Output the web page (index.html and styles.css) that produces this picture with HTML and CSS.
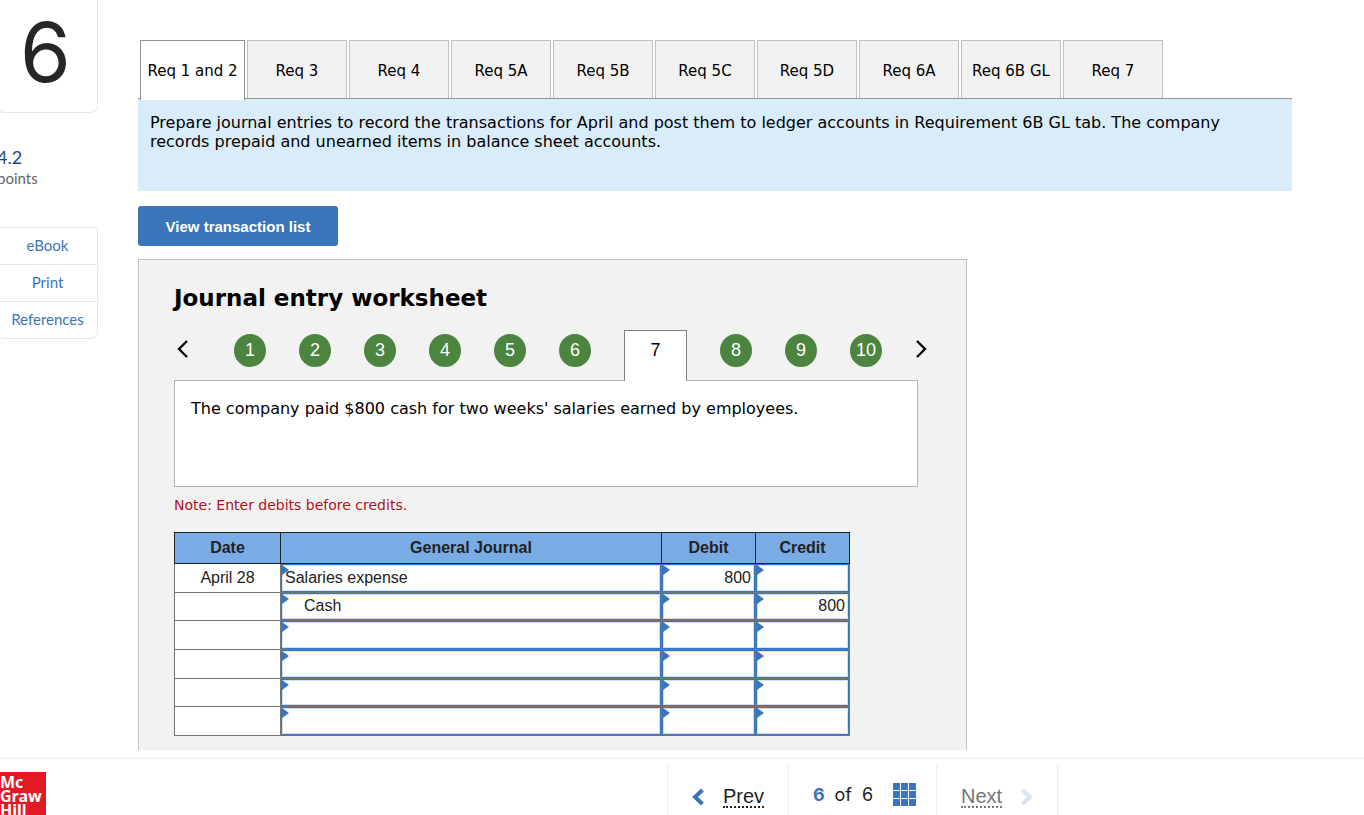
FILE: index.html
```html
<!DOCTYPE html>
<html lang="en">
<head>
    <meta charset="UTF-8">
    <title>Journal entry worksheet</title>
    <link rel="stylesheet" href="styles.css">
</head>
<body>
    <div class="page">
        <aside class="sidebar">
            <div class="question-number">6</div>
            <div class="points">
                <span class="points-value">4.2</span>
                <span class="points-label">points</span>
            </div>
            <nav class="resources">
                <a href="#ebook">eBook</a>
                <a href="#print">Print</a>
                <a href="#references">References</a>
            </nav>
        </aside>

        <main class="content">
            <div class="tabs">
                <button class="tab active">Req 1 and 2</button>
                <button class="tab">Req 3</button>
                <button class="tab">Req 4</button>
                <button class="tab">Req 5A</button>
                <button class="tab">Req 5B</button>
                <button class="tab">Req 5C</button>
                <button class="tab">Req 5D</button>
                <button class="tab">Req 6A</button>
                <button class="tab">Req 6B GL</button>
                <button class="tab">Req 7</button>
            </div>
            <p class="instructions">Prepare journal entries to record the transactions for April and post them to ledger accounts in Requirement 6B GL tab. The company records prepaid and unearned items in balance sheet accounts.</p>

            <button class="view-list">View transaction list</button>

            <section class="worksheet">
                <h1>Journal entry worksheet</h1>

                <div class="pager">
                    <button class="arrow arrow-prev" aria-label="Previous entry">
                        <svg width="12" height="18" viewBox="0 0 12 18"><path d="M10 1 L2 9 L10 17" fill="none" stroke="#000" stroke-width="2.3"/></svg>
                    </button>
                    <button class="step">1</button>
                    <button class="step">2</button>
                    <button class="step">3</button>
                    <button class="step">4</button>
                    <button class="step">5</button>
                    <button class="step">6</button>
                    <button class="step current">7</button>
                    <button class="step">8</button>
                    <button class="step">9</button>
                    <button class="step">10</button>
                    <button class="arrow" aria-label="Next entry">
                        <svg width="12" height="18" viewBox="0 0 12 18"><path d="M2 1 L10 9 L2 17" fill="none" stroke="#000" stroke-width="2.3"/></svg>
                    </button>
                </div>

                <div class="description">The company paid $800 cash for two weeks' salaries earned by employees.</div>
                <p class="note">Note: Enter debits before credits.</p>

                <table class="journal">
                    <thead>
                        <tr>
                            <th class="col-date">Date</th>
                            <th>General Journal</th>
                            <th class="col-amount">Debit</th>
                            <th class="col-amount">Credit</th>
                        </tr>
                    </thead>
                    <tbody>
                        <tr>
                            <td>April 28</td>
                            <td class="entry"><input type="text" aria-label="Account 1" value="Salaries expense"></td>
                            <td class="entry amount"><input type="text" aria-label="Debit 1" value="800"></td>
                            <td class="entry amount"><input type="text" aria-label="Credit 1"></td>
                        </tr>
                        <tr>
                            <td></td>
                            <td class="entry indent"><input type="text" aria-label="Account 2" value="Cash"></td>
                            <td class="entry amount"><input type="text" aria-label="Debit 2"></td>
                            <td class="entry amount"><input type="text" aria-label="Credit 2" value="800"></td>
                        </tr>
                        <tr>
                            <td></td>
                            <td class="entry"><input type="text" aria-label="Account 3"></td>
                            <td class="entry amount"><input type="text" aria-label="Debit 3"></td>
                            <td class="entry amount"><input type="text" aria-label="Credit 3"></td>
                        </tr>
                        <tr>
                            <td></td>
                            <td class="entry"><input type="text" aria-label="Account 4"></td>
                            <td class="entry amount"><input type="text" aria-label="Debit 4"></td>
                            <td class="entry amount"><input type="text" aria-label="Credit 4"></td>
                        </tr>
                        <tr>
                            <td></td>
                            <td class="entry"><input type="text" aria-label="Account 5"></td>
                            <td class="entry amount"><input type="text" aria-label="Debit 5"></td>
                            <td class="entry amount"><input type="text" aria-label="Credit 5"></td>
                        </tr>
                        <tr>
                            <td></td>
                            <td class="entry"><input type="text" aria-label="Account 6"></td>
                            <td class="entry amount"><input type="text" aria-label="Debit 6"></td>
                            <td class="entry amount"><input type="text" aria-label="Credit 6"></td>
                        </tr>
                    </tbody>
                </table>
            </section>
        </main>
    </div>

    <footer class="footer">
        <div class="logo">Mc<br>Graw<br>Hill</div>
        <nav class="question-nav">
            <a class="nav-cell prev" href="#prev">
                <svg width="12" height="18" viewBox="0 0 12 18"><path d="M10.5 2 L3 9 L10.5 16" fill="none" stroke="#3a75ba" stroke-width="4"/></svg>
                <span>Prev</span>
            </a>
            <div class="nav-cell count">
                <b>6</b>
                <span>of</span>
                <span>6</span>
                <button class="grid-button" aria-label="All questions">
                    <svg width="23" height="23" viewBox="0 0 23 23" fill="#3a75ba">
                        <path d="M0 0h7v7H0zM8 0h7v7H8zM16 0h7v7h-7zM0 8h7v7H0zM8 8h7v7H8zM16 8h7v7h-7zM0 16h7v7H0zM8 16h7v7H8zM16 16h7v7h-7z"/>
                    </svg>
                </button>
            </div>
            <a class="nav-cell next" href="#next">
                <span>Next</span>
                <svg width="12" height="18" viewBox="0 0 12 18"><path d="M1.5 2 L9 9 L1.5 16" fill="none" stroke="#d8e4f1" stroke-width="4"/></svg>
            </a>
        </nav>
    </footer>
</body>
</html>
```
FILE: styles.css
```css
* {
    box-sizing: border-box;
}

body {
    margin: 0;
    height: 100vh;
    display: flex;
    flex-direction: column;
    overflow: hidden;
    background: #fff;
    color: #000;
    font-family: "DejaVu Sans", Verdana, sans-serif;
    font-size: 15px;
}

button {
    margin: 0;
    padding: 0;
    border: none;
    background: none;
    font: inherit;
    color: inherit;
    cursor: pointer;
}

.page {
    flex: 1;
    min-height: 0;
    display: flex;
    overflow: hidden;
    margin-bottom: 8px;
}

/* left column */
.sidebar {
    flex: none;
    width: 101px;
    margin-left: -3px;
    font-family: Lato, sans-serif;
}

.question-number {
    height: 113px;
    padding-right: 4px;
    border: 1px solid #e8e8e8;
    border-top: none;
    border-radius: 0 0 7px 7px;
    font-family: Inter, sans-serif;
    font-size: 82px;
    line-height: 106px;
    text-align: center;
    color: #262626;
}

.points {
    display: flex;
    flex-direction: column;
    margin: 34px 0 38px;
    line-height: 21px;
}

.points-value {
    font-size: 18px;
    color: #1f497d;
}

.points-label {
    color: #666;
}

.resources {
    display: flex;
    flex-direction: column;
    border: 1px solid #e8e8e8;
    border-radius: 0 0 7px 7px;
}

.resources a {
    padding-bottom: 2px;
    line-height: 34px;
    text-align: center;
    text-decoration: none;
    color: #3a75ba;
}

.resources a + a {
    border-top: 1px solid #e8e8e8;
}

/* requirement tabs */
.content {
    flex: 1;
    min-width: 0;
    padding: 40px 72px 0 40px;
}

.tabs {
    display: flex;
    gap: 2px;
    padding-left: 2px;
    border-bottom: 1px solid #949494;
}

.tab {
    flex: none;
    width: 100px;
    height: 58px;
    padding-top: 3px;
    border: 1px solid #c0c0c0;
    border-bottom: none;
    background: #f2f2f2;
}

.tab.active {
    width: 105px;
    height: 60px;
    margin-bottom: -2px;
    padding-top: 1px;
    border-color: #949494;
    background: #fff;
}

.instructions {
    min-height: 92px;
    margin: 0;
    padding: 14px 12px;
    background: #d9ecfa;
    font-size: 16px;
    line-height: 19px;
}

.view-list {
    display: block;
    width: 200px;
    height: 40px;
    margin: 15px 0 13px;
    border-radius: 3px;
    background: #3a75ba;
    color: #fff;
    font-family: "Liberation Sans", Arial, sans-serif;
    font-weight: bold;
}

/* worksheet */
.worksheet {
    max-width: 829px;
    padding: 24px 48px 32px 35px;
    border: 1px solid #c0c0c0;
    background: #f2f2f2;
}

.worksheet h1 {
    margin: 0;
    font-size: 23px;
    line-height: 28px;
}

.pager {
    display: flex;
    gap: 33px;
    height: 50px;
    margin-top: 18px;
    padding-left: 3px;
    font-family: "Liberation Sans", Arial, sans-serif;
    font-size: 18px;
}

.arrow {
    flex: none;
    width: 12px;
    height: 18px;
    margin-top: 10px;
}

.arrow-prev {
    margin-right: 12px;
}

.arrow svg {
    display: block;
}

.step {
    flex: none;
    width: 32px;
    height: 33px;
    margin-top: 4px;
    border-radius: 50%;
    background: #4b853f;
    color: #fff;
}

.step.current {
    width: 63px;
    height: 51px;
    margin-top: 0;
    padding-bottom: 11px;
    border: 1px solid #808080;
    border-bottom: none;
    border-radius: 0;
    background: #fff;
    color: #000;
}

.description {
    min-height: 107px;
    padding: 18px 16px;
    border: 1px solid #b5b5b5;
    background: #fff;
    font-size: 16px;
    line-height: 19px;
}

.note {
    margin: 9px 0 18px;
    font-size: 14px;
    line-height: 18px;
    color: #b01116;
}

.journal {
    width: 676px;
    height: 204px;
    border-collapse: collapse;
    table-layout: fixed;
    background: #fff;
    color: #222;
    font-family: "Liberation Sans", Arial, sans-serif;
    font-size: 16px;
    text-align: center;
}

.journal th {
    height: 31px;
    padding: 0;
    border: 1px solid #222;
    background: #79ace5;
}

.journal td {
    position: relative;
    height: 28px;
    padding: 0;
    border: 1px solid #767676;
}

.col-date {
    width: 106px;
}

.col-amount {
    width: 94px;
}

.entry input {
    display: block;
    width: 100%;
    height: 100%;
    padding: 0 3px;
    border: 1px solid #3a75ba;
    border-radius: 0;
    outline: 0;
    background: #fff;
    box-shadow: inset 0 0 0 1px #d0e1f3;
    font: inherit;
    color: inherit;
}

.amount input {
    text-align: right;
}

.indent input {
    padding-left: 22px;
}

/* small marker in the corner of every answer cell */
.entry::before {
    content: "";
    position: absolute;
    top: 1px;
    left: 1px;
    border: solid transparent;
    border-width: 5px 0 5px 7px;
    border-left-color: #3a75ba;
}

/* bottom bar */
.footer {
    flex: none;
    display: flex;
    height: 57px;
    overflow: hidden;
    border-top: 1px solid #ececec;
}

.logo {
    flex: none;
    width: 46px;
    height: 46px;
    margin-top: 13px;
    padding-top: 3px;
    background: #e21a23;
    color: #fff;
    font: bold 16px/14px "Noto Sans", sans-serif;
}

.question-nav {
    display: flex;
    margin: 6px 0 0 621px;
    border-right: 1px solid #ececec;
    font-family: "Liberation Sans", Arial, sans-serif;
    font-size: 20px;
}

.nav-cell {
    display: flex;
    align-items: center;
    justify-content: space-between;
    width: 121px;
    padding: 13px 24px 0;
    border-left: 1px solid #ececec;
    color: #222;
    text-decoration: none;
}

.nav-cell.count {
    width: 148px;
    padding: 9px 20px 0 24px;
    font-family: Inter, sans-serif;
    font-size: 18px;
}

.count b {
    color: #3a75ba;
}

.grid-button {
    margin-left: 10px;
}

.grid-button svg {
    display: block;
}

.prev span,
.next span {
    border-bottom: 2px dotted #222;
    line-height: 20px;
}

.next span {
    border-color: #767676;
    color: #767676;
}
```
